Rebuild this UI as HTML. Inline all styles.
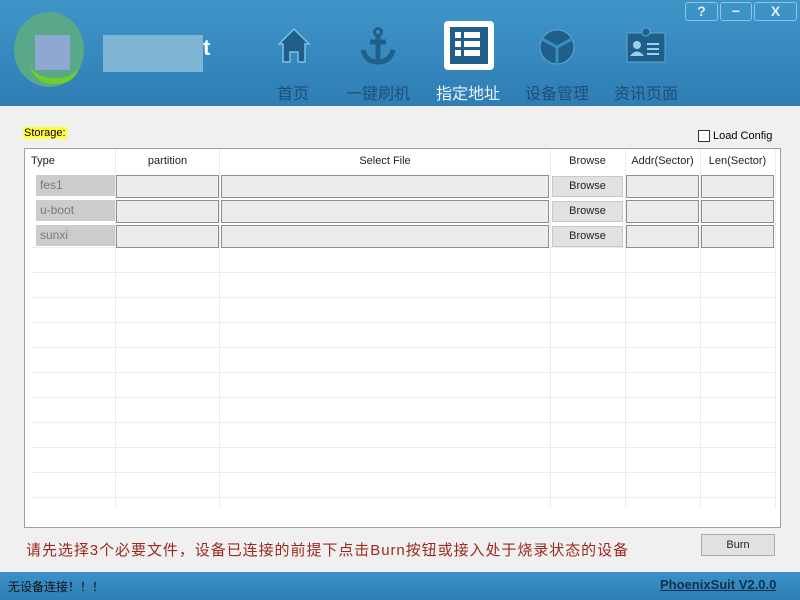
<!DOCTYPE html>
<html><head><meta charset="utf-8"><style>
*{margin:0;padding:0;box-sizing:border-box}
body{width:800px;height:600px;overflow:hidden;background:#f0f0f0;font-family:"Liberation Sans","Noto Sans CJK SC",sans-serif;position:relative}
.hdr{position:absolute;left:0;top:0;width:800px;height:106px;background:linear-gradient(#3f95c8,#3587bd 60%,#2f7db3);}
.nav{position:absolute;top:80px;font-size:16px;color:#1d4f78;}
.ic{position:absolute;}
.wb{position:absolute;top:2px;height:19px;border:1px solid #8cc4e6;border-radius:3px;color:#dff0ff;font-weight:bold;font-size:14px;text-align:center;line-height:17px}
.abs{position:absolute}
.cell{position:absolute;height:23px;background:#ececec;border:1px solid #8e8e8e;font-size:11px;line-height:21px;color:#333}
.sel{position:absolute;height:21px;background:#cccccc;font-size:12px;color:#7a7a7a;line-height:21px;padding-left:4px}
.bt{position:absolute;height:21px;background:#e1e1e1;border:1px solid #c8c8c8;font-size:11px;text-align:center;line-height:19px;color:#222}
.th{position:absolute;top:155px;font-size:11px;color:#222;text-align:center}
</style></head><body>
<div class="hdr">
  <div class="abs" style="left:14px;top:12px;width:70px;height:75px;border-radius:50%;background:#5aa88a"></div>
  <div class="abs" style="left:30px;top:62px;width:50px;height:22px;border-bottom:6px solid #6fce2a;border-radius:0 0 30px 30px"></div>
  <div class="abs" style="left:35px;top:35px;width:35px;height:35px;background:#8ea8d2"></div>
  <div class="abs" style="left:103px;top:35px;width:100px;height:37px;background:#7fb6d6"></div>
  <div class="abs" style="left:203px;top:35px;color:#fff;font-weight:bold;font-size:22px">t</div>
  <svg class="ic" style="left:276px;top:26px" width="36" height="38"><path d="M3 18 L18 3 L33 18 L29 18 L29 36 L22 36 L22 26 L14 26 L14 36 L7 36 L7 18Z" fill="#1f5f8a" stroke="#7ac0e6" stroke-width="1.5"/></svg>
  <svg class="ic" style="left:358px;top:26px" width="40" height="40"><g fill="none" stroke="#1f5f8a" stroke-width="5"><circle cx="20" cy="6" r="3.5" stroke-width="3"/><path d="M20 10 V35 M12 16 H28 M5 24 Q8 36 20 36 Q32 36 35 24"/></g></svg>
  <div class="abs" style="left:444px;top:21px;width:50px;height:49px;background:#fff;border-radius:4px"></div>
  <div class="abs" style="left:450px;top:27px;width:38px;height:37px;background:#1f5f8a"></div>
  <svg class="ic" style="left:455px;top:32px" width="28" height="28"><g fill="#fff"><rect x="0" y="0" width="6" height="6"/><rect x="9" y="0" width="16" height="6"/><rect x="0" y="9" width="6" height="6"/><rect x="9" y="9" width="16" height="6"/><rect x="0" y="18" width="6" height="6"/><rect x="9" y="18" width="16" height="6"/></g></svg>
  <svg class="ic" style="left:537px;top:27px" width="40" height="40"><circle cx="20" cy="20" r="17" fill="#1f5f8a" stroke="#5ea8d4"/><path d="M20 20 V37 M20 20 L5 12 M20 20 L35 12" stroke="#3a8ec2" stroke-width="3"/></svg>
  <svg class="ic" style="left:625px;top:25px" width="42" height="40"><rect x="2" y="8" width="38" height="29" fill="#1f5f8a" stroke="#5ea8d4"/><circle cx="21" cy="7" r="4" fill="#1f5f8a" stroke="#5ea8d4"/><circle cx="12" cy="20" r="4" fill="#9bd0ee"/><path d="M5 31 Q12 22 19 31Z" fill="#9bd0ee"/><path d="M22 19 H34 M22 24 H34 M22 29 H34" stroke="#9bd0ee" stroke-width="2"/></svg>
  <div class="nav" style="left:277px">首页</div>
  <div class="nav" style="left:346px">一键刷机</div>
  <div class="nav" style="left:436px;color:#e9f4fc">指定地址</div>
  <div class="nav" style="left:525px">设备管理</div>
  <div class="nav" style="left:614px">资讯页面</div>
  <div class="wb" style="left:685px;width:33px">?</div>
  <div class="wb" style="left:720px;width:32px">−</div>
  <div class="wb" style="left:754px;width:43px">X</div>
</div>
<div class="abs" style="left:23px;top:127px;background:#ffff40;font-size:11px;padding:0 1px">Storage:</div>
<div class="abs" style="left:698px;top:130px;width:12px;height:12px;border:1px solid #333;background:#fff"></div>
<div class="abs" style="left:713px;top:130px;font-size:11px">Load Config</div>
<div class="abs" style="left:24px;top:148px;width:757px;height:380px;background:#fff;border:1px solid #a0a0a0"></div>
<svg class="abs" style="left:24px;top:148px" width="757" height="380">
<g stroke="#ececec" stroke-width="1">
<path d="M91.5 2V360 M195.5 2V360 M526.5 2V360 M601.5 2V360 M676.5 2V360 M751.5 2V360"/>
<path d="M8 124.5H752 M8 149.5H752 M8 174.5H752 M8 199.5H752 M8 224.5H752 M8 249.5H752 M8 274.5H752 M8 299.5H752 M8 324.5H752 M8 349.5H752 M8 99.5H752"/>
</g></svg>
<div class="th" style="left:31px">Type</div>
<div class="th" style="left:116px;width:103px">partition</div>
<div class="th" style="left:220px;width:330px">Select File</div>
<div class="th" style="left:550px;width:75px">Browse</div>
<div class="th" style="left:625px;width:75px">Addr(Sector)</div>
<div class="th" style="left:700px;width:75px">Len(Sector)</div>
<div class="sel" style="left:36px;top:175px;width:79px">fes1</div>
<div class="sel" style="left:36px;top:200px;width:79px">u-boot</div>
<div class="sel" style="left:36px;top:225px;width:79px">sunxi</div>
<div class="cell" style="left:116px;top:175px;width:103px"></div>
<div class="cell" style="left:116px;top:200px;width:103px"></div>
<div class="cell" style="left:116px;top:225px;width:103px"></div>
<div class="cell" style="left:221px;top:175px;width:328px"></div>
<div class="cell" style="left:221px;top:200px;width:328px"></div>
<div class="cell" style="left:221px;top:225px;width:328px"></div>
<div class="bt" style="left:552px;top:176px;width:71px">Browse</div>
<div class="bt" style="left:552px;top:201px;width:71px">Browse</div>
<div class="bt" style="left:552px;top:226px;width:71px">Browse</div>
<div class="cell" style="left:626px;top:175px;width:73px"></div>
<div class="cell" style="left:626px;top:200px;width:73px"></div>
<div class="cell" style="left:626px;top:225px;width:73px"></div>
<div class="cell" style="left:701px;top:175px;width:73px"></div>
<div class="cell" style="left:701px;top:200px;width:73px"></div>
<div class="cell" style="left:701px;top:225px;width:73px"></div>
<div class="abs" style="left:26px;top:539px;font-size:15px;color:#9b2a1e;letter-spacing:0.95px">请先选择3个必要文件，设备已连接的前提下点击Burn按钮或接入处于烧录状态的设备</div>
<div class="bt" style="left:701px;top:534px;width:74px;height:22px;line-height:20px;border-color:#adadad">Burn</div>
<div class="abs" style="left:0;top:572px;width:800px;height:28px;background:linear-gradient(#3b92c7,#2e7fb5)"></div>
<div class="abs" style="left:8px;top:578px;font-size:12px;color:#111">无设备连接！！！</div>
<div class="abs" style="left:660px;top:577px;font-size:13px;font-weight:bold;color:#10304d;text-decoration:underline">PhoenixSuit V2.0.0</div>
</body></html>
